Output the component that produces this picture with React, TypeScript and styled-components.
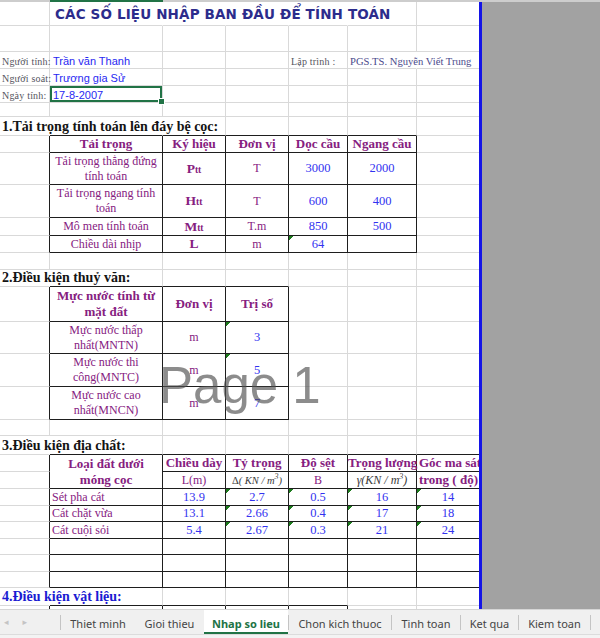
import React from 'react'
import styled, { createGlobalStyle, css } from 'styled-components'

const GRID = '#d9d9d9'
const INK = '#1e1e1e'
const PURPLE = '#86207f'
const BLUE = '#3232f0'
const EXCEL_GREEN = '#217346'

const GlobalStyle = createGlobalStyle`
  html, body {
    margin: 0;
    padding: 0;
    background: #fff;
  }
  body {
    width: 600px;
    height: 638px;
    overflow: hidden;
    font-family: "Liberation Serif", serif;
  }
`

const Screen = styled.div`
  display: flex;
  flex-direction: column;
  width: 600px;
  height: 638px;
  overflow: hidden;
`

// bottom edge of the column header, column B selected
const HeaderEdge = styled.div`
  flex: none;
  height: 2px;
  background: linear-gradient(to right, #cdcdcd 50px, ${EXCEL_GREEN} 50px 163px, #cdcdcd 163px);
`

const Workspace = styled.div`
  display: flex;
  flex: none;
  height: 607px;
  overflow: hidden;
`

const Page = styled.div`
  position: relative;
  flex: none;
  width: 479px;
  border-right: 3px solid #1414e6;
  overflow: hidden;
  background: #fff;
`

const OutsidePage = styled.div`
  flex: 1;
  background: #a2a2a2;
`

const Watermark = styled.div`
  position: absolute;
  left: 159px;
  top: 358px;
  font: 51px/51px "Liberation Sans", Arial, sans-serif;
  color: rgba(80, 80, 80, 0.66);
  white-space: nowrap;
  pointer-events: none;
`

const Sheet = styled.table`
  border-collapse: separate;
  border-spacing: 0;
  table-layout: fixed;
  width: 479px;
`

const Col = styled.col<{ $w: number }>`
  width: ${p => p.$w}px;
`

const Row = styled.tr<{ $h: number }>`
  height: ${p => p.$h}px;
`

interface CellProps {
  $r?: boolean
  $b?: boolean
  $open?: boolean
  $end?: boolean
  $center?: boolean
  $mid?: boolean
  $tri?: boolean
  $sel?: boolean
  $flush?: boolean
  $lh?: number
}

const Cell = styled.td<CellProps>`
  box-sizing: border-box;
  padding: ${p => (p.$flush ? '0' : '0 2px')};
  border-right: 1px solid ${p => (p.$r ? INK : GRID)};
  border-bottom: 1px solid ${p => (p.$b ? INK : GRID)};
  text-align: ${p => (p.$center ? 'center' : 'left')};
  vertical-align: ${p => (p.$mid ? 'middle' : 'bottom')};
  white-space: nowrap;
  line-height: ${p => p.$lh ?? 14}px;
  font-size: 12px;
  ${p => p.$open && css`border-right-color: transparent;`}
  ${p => p.$end && css`border-right: none;`}
  ${p => p.$tri && css`background: linear-gradient(135deg, #1c7a1c 0 3.4px, transparent 3.4px);`}
  ${p =>
    p.$sel &&
    css`
      position: relative;
      box-shadow: inset 0 0 0 2px ${EXCEL_GREEN};
      &::after {
        content: '';
        position: absolute;
        right: -3px;
        bottom: -3px;
        width: 5px;
        height: 5px;
        background: ${EXCEL_GREEN};
        border: 1px solid #fff;
      }
    `}
`

const Title = styled.span`
  margin-left: 3px;
  font: 700 13.5px "DejaVu Sans", sans-serif;
  letter-spacing: 0.15px;
  color: #2c2c8c;
`

const Label = styled.span`
  font: 10px "Liberation Serif", serif;
  color: #555560;
  letter-spacing: 0.2px;
`

const Name = styled.span`
  margin-left: 1px;
  font: 11px "Liberation Sans", Arial, sans-serif;
  color: #2828f2;
`

const Author = styled.span`
  font: 10.6px "Liberation Serif", serif;
  color: #4b4b8c;
`

const Section = styled.span<{ $blue?: boolean }>`
  font: 700 14px "Liberation Serif", serif;
  color: ${p => (p.$blue ? '#1b1bd2' : '#141414')};
`

const Head = styled.span`
  font: 700 13px "Liberation Serif", serif;
  color: ${PURPLE};
`

const Text = styled.span`
  font: 12px "Liberation Serif", serif;
  color: ${PURPLE};
`

const Value = styled.span`
  font: 12.5px "Liberation Serif", serif;
  color: ${BLUE};
`

const Symbol = styled.span`
  font: 700 13.5px "Liberation Serif", serif;
  color: ${PURPLE};
  small {
    font-size: 9.5px;
  }
`

const Formula = styled.span<{ $small?: boolean }>`
  font: italic ${p => (p.$small ? 10.5 : 12)}px "Liberation Serif", serif;
  color: #3a3a3a;
  b {
    font-style: normal;
    font-weight: 400;
  }
  sup {
    font-size: 8px;
    line-height: 0;
    vertical-align: 5px;
  }
`

const TabBar = styled.div`
  display: flex;
  flex: none;
  align-items: stretch;
  height: 25px;
  box-sizing: border-box;
  background: #f0f0f0;
  border-top: 1px solid #d6d6d6;
  font: 11px "Noto Sans", "Open Sans", sans-serif;
  color: #444;
`

const Nav = styled.div`
  display: flex;
  align-items: center;
  gap: 14px;
  width: 60px;
  padding-left: 4px;
  box-sizing: border-box;
  font: 9px "DejaVu Sans", sans-serif;
  color: #c4c4c4;
`

const Sep = styled.span`
  flex: none;
  align-self: center;
  width: 1px;
  height: 15px;
  background: #c4c4c4;
`

const Tab = styled.div<{ $w: number; $active?: boolean }>`
  flex: none;
  display: flex;
  align-items: center;
  justify-content: center;
  width: ${p => p.$w}px;
  padding-top: 2px;
  box-sizing: border-box;
  white-space: nowrap;
  ${p =>
    p.$active &&
    css`
      background: #fff;
      color: ${EXCEL_GREEN};
      font-weight: 700;
      border-bottom: 2px solid ${EXCEL_GREEN};
      padding-top: 4px;
    `}
`

const StatusEdge = styled.div`
  flex: 1;
  background: #f3f3f3;
  border-top: 1px solid #dcdcdc;
`

const BlankRow = ({ h }: { h: number }) => (
  <Row $h={h}>
    <Cell />
    <Cell />
    <Cell />
    <Cell />
    <Cell />
    <Cell />
    <Cell $end />
  </Row>
)

// a row of table 3 ("Điều kiện địa chất")
const SoilRow = ({ h, name, cells }: { h: number; name?: string; cells?: string[] }) => (
  <Row $h={h}>
    <Cell $r />
    <Cell $r $b>
      {name && <Text>{name}</Text>}
    </Cell>
    <Cell $r $b $center>
      {cells && <Value>{cells[0]}</Value>}
    </Cell>
    <Cell $r $b $center $tri={!!cells}>
      {cells && <Value>{cells[1]}</Value>}
    </Cell>
    <Cell $r $b $center $tri={!!cells}>
      {cells && <Value>{cells[2]}</Value>}
    </Cell>
    <Cell $r $b $center $tri={!!cells}>
      {cells && <Value>{cells[3]}</Value>}
    </Cell>
    <Cell $end $b $center $tri={!!cells}>
      {cells && <Value>{cells[4]}</Value>}
    </Cell>
  </Row>
)

const WaterRow = ({ h, name, value, tri }: { h: number; name: React.ReactNode; value: string; tri?: boolean }) => (
  <Row $h={h}>
    <Cell $r />
    <Cell $r $b $center $mid $lh={15}>
      <Text>{name}</Text>
    </Cell>
    <Cell $r $b $center $mid>
      <Text>m</Text>
    </Cell>
    <Cell $r $b $center $mid $tri={tri}>
      <Value>{value}</Value>
    </Cell>
    <Cell />
    <Cell />
    <Cell $end />
  </Row>
)

const LoadRow = ({
  h,
  name,
  symbol,
  unit,
  along,
  across,
  tri,
}: {
  h: number
  name: React.ReactNode
  symbol: React.ReactNode
  unit: string
  along: string
  across: string
  tri?: boolean
}) => (
  <Row $h={h}>
    <Cell $r />
    <Cell $r $b $center $mid $lh={15}>
      <Text>{name}</Text>
    </Cell>
    <Cell $r $b $center $mid>
      <Symbol>{symbol}</Symbol>
    </Cell>
    <Cell $r $b $center $mid>
      <Text>{unit}</Text>
    </Cell>
    <Cell $r $b $center $mid $tri={tri}>
      <Value>{along}</Value>
    </Cell>
    <Cell $r $b $center $mid>
      <Value>{across}</Value>
    </Cell>
    <Cell $end />
  </Row>
)

const tabs = [
  { label: 'Thiet minh', w: 74, sep: true },
  { label: 'Gioi thieu', w: 69 },
  { label: 'Nhap so lieu', w: 84, active: true },
  { label: 'Chon kich thuoc', w: 102, sep: true },
  { label: 'Tinh toan', w: 68, sep: true },
  { label: 'Ket qua', w: 57, sep: true },
  { label: 'Kiem toan', w: 71, sep: true },
]

export default function App() {
  return (
    <>
      <GlobalStyle />
      <Screen>
        <HeaderEdge />
        <Workspace>
          <Page>
            <Sheet>
              <colgroup>
                {[50, 113, 63, 63, 59, 69, 62].map((w, i) => (
                  <Col key={i} $w={w} />
                ))}
              </colgroup>
              <tbody>
                <Row $h={24}>
                  <Cell />
                  <Cell $open $mid>
                    <Title>CÁC SỐ LIỆU NHẬP BAN ĐẦU ĐỂ TÍNH TOÁN</Title>
                  </Cell>
                  <Cell $open />
                  <Cell $open />
                  <Cell $open />
                  <Cell />
                  <Cell $end />
                </Row>
                <BlankRow h={26} />
                <Row $h={17}>
                  <Cell>
                    <Label>Người tính:</Label>
                  </Cell>
                  <Cell>
                    <Name>Trần văn Thanh</Name>
                  </Cell>
                  <Cell />
                  <Cell />
                  <Cell>
                    <Label>Lập trình :</Label>
                  </Cell>
                  <Cell $open>
                    <Author>PGS.TS. Nguyễn Viết Trung</Author>
                  </Cell>
                  <Cell $end />
                </Row>
                <Row $h={17}>
                  <Cell>
                    <Label>Người soát:</Label>
                  </Cell>
                  <Cell>
                    <Name>Trương gia Sử</Name>
                  </Cell>
                  <Cell />
                  <Cell />
                  <Cell />
                  <Cell />
                  <Cell $end />
                </Row>
                <Row $h={17}>
                  <Cell>
                    <Label>Ngày tính:</Label>
                  </Cell>
                  <Cell $sel>
                    <Name>17-8-2007</Name>
                  </Cell>
                  <Cell />
                  <Cell />
                  <Cell />
                  <Cell />
                  <Cell $end />
                </Row>
                <BlankRow h={14} />

                {/* 1. loads */}
                <Row $h={19}>
                  <Cell $open>
                    <Section>1.Tải trọng tính toán lên đáy bệ cọc:</Section>
                  </Cell>
                  <Cell $open $b />
                  <Cell $b />
                  <Cell $b />
                  <Cell $b />
                  <Cell $b />
                  <Cell $end />
                </Row>
                <Row $h={17}>
                  <Cell $r />
                  <Cell $r $b $center $mid>
                    <Head>Tải trọng</Head>
                  </Cell>
                  <Cell $r $b $center $mid>
                    <Head>Ký hiệu</Head>
                  </Cell>
                  <Cell $r $b $center $mid>
                    <Head>Đơn vị</Head>
                  </Cell>
                  <Cell $r $b $center $mid>
                    <Head>Dọc cầu</Head>
                  </Cell>
                  <Cell $r $b $center $mid>
                    <Head>Ngang cầu</Head>
                  </Cell>
                  <Cell $end />
                </Row>
                <LoadRow
                  h={32}
                  name={<>Tải trọng thẳng đứng<br />tính toán</>}
                  symbol={<>P<small>tt</small></>}
                  unit="T"
                  along="3000"
                  across="2000"
                />
                <LoadRow
                  h={33}
                  name={<>Tải trọng ngang tính<br />toán</>}
                  symbol={<>H<small>tt</small></>}
                  unit="T"
                  along="600"
                  across="400"
                />
                <LoadRow h={18} name="Mô men tính toán" symbol={<>M<small>tt</small></>} unit="T.m" along="850" across="500" />
                <LoadRow h={17} name="Chiều dài nhịp" symbol="L" unit="m" along="64" across="" tri />
                <BlankRow h={17} />

                {/* 2. water levels */}
                <Row $h={17}>
                  <Cell $open>
                    <Section>2.Điều kiện thuỷ văn:</Section>
                  </Cell>
                  <Cell $b />
                  <Cell $b />
                  <Cell $b />
                  <Cell />
                  <Cell />
                  <Cell $end />
                </Row>
                <Row $h={35}>
                  <Cell $r />
                  <Cell $r $b $center $mid $lh={15}>
                    <Head>
                      Mực nước tính từ
                      <br />
                      mặt đất
                    </Head>
                  </Cell>
                  <Cell $r $b $center $mid>
                    <Head>Đơn vị</Head>
                  </Cell>
                  <Cell $r $b $center $mid>
                    <Head>Trị số</Head>
                  </Cell>
                  <Cell />
                  <Cell />
                  <Cell $end />
                </Row>
                <WaterRow h={32} name={<>Mực nước thấp<br />nhất(MNTN)</>} value="3" tri />
                <WaterRow h={33} name={<>Mực nước thi<br />công(MNTC)</>} value="5" tri />
                <WaterRow h={33} name={<>Mực nước cao<br />nhất(MNCN)</>} value="7" />
                <BlankRow h={16} />

                {/* 3. soil */}
                <Row $h={19}>
                  <Cell $open>
                    <Section>3.Điều kiện địa chất:</Section>
                  </Cell>
                  <Cell $b />
                  <Cell $b />
                  <Cell $b />
                  <Cell $b />
                  <Cell $b />
                  <Cell $end $b />
                </Row>
                <Row $h={17}>
                  <Cell $r />
                  <Cell $r $b $center $mid $lh={16} rowSpan={2}>
                    <Head>
                      Loại đất dưới
                      <br />
                      móng cọc
                    </Head>
                  </Cell>
                  <Cell $r $b $center $mid>
                    <Head>Chiều dày</Head>
                  </Cell>
                  <Cell $r $b $center $mid>
                    <Head>Tỷ trọng</Head>
                  </Cell>
                  <Cell $r $b $center $mid>
                    <Head>Độ sệt</Head>
                  </Cell>
                  <Cell $r $b $center $mid $flush>
                    <Head>Trọng lượng</Head>
                  </Cell>
                  <Cell $end $b $center $mid>
                    <Head>Góc ma sát</Head>
                  </Cell>
                </Row>
                <Row $h={17}>
                  <Cell $r />
                  <Cell $r $b $center $mid>
                    <Text>L(m)</Text>
                  </Cell>
                  <Cell $r $b $center $mid>
                    <Formula $small>
                      <b>Δ</b>( KN / m<sup>3</sup>)
                    </Formula>
                  </Cell>
                  <Cell $r $b $center $mid>
                    <Text>B</Text>
                  </Cell>
                  <Cell $r $b $center $mid>
                    <Formula>
                      γ(KN / m<sup>3</sup>)
                    </Formula>
                  </Cell>
                  <Cell $end $b $center $mid>
                    <Head>trong ( độ)</Head>
                  </Cell>
                </Row>
                <SoilRow h={17} name="Sét pha cát" cells={['13.9', '2.7', '0.5', '16', '14']} />
                <SoilRow h={16} name="Cát chặt vừa" cells={['13.1', '2.66', '0.4', '17', '18']} />
                <SoilRow h={17} name="Cát cuội sỏi" cells={['5.4', '2.67', '0.3', '21', '24']} />
                <SoilRow h={16} />
                <SoilRow h={17} />
                <SoilRow h={16} />

                {/* 4. materials */}
                <Row $h={18}>
                  <Cell $open>
                    <Section $blue>4.Điều kiện vật liệu:</Section>
                  </Cell>
                  <Cell $b />
                  <Cell $b />
                  <Cell $b />
                  <Cell $b />
                  <Cell />
                  <Cell $end />
                </Row>
                <Row $h={20}>
                  <Cell $r />
                  <Cell $r $b />
                  <Cell $r $b />
                  <Cell $r $b />
                  <Cell $r $b />
                  <Cell />
                  <Cell $end />
                </Row>
              </tbody>
            </Sheet>
            <Watermark>Page 1</Watermark>
          </Page>
          <OutsidePage />
        </Workspace>
        <TabBar>
          <Nav>
            <span>◂</span>
            <span>▸</span>
          </Nav>
          {tabs.map(t => (
            <React.Fragment key={t.label}>
              {t.sep && <Sep />}
              <Tab $w={t.w} $active={t.active}>
                {t.label}
              </Tab>
            </React.Fragment>
          ))}
          <Sep />
        </TabBar>
        <StatusEdge />
      </Screen>
    </>
  )
}
